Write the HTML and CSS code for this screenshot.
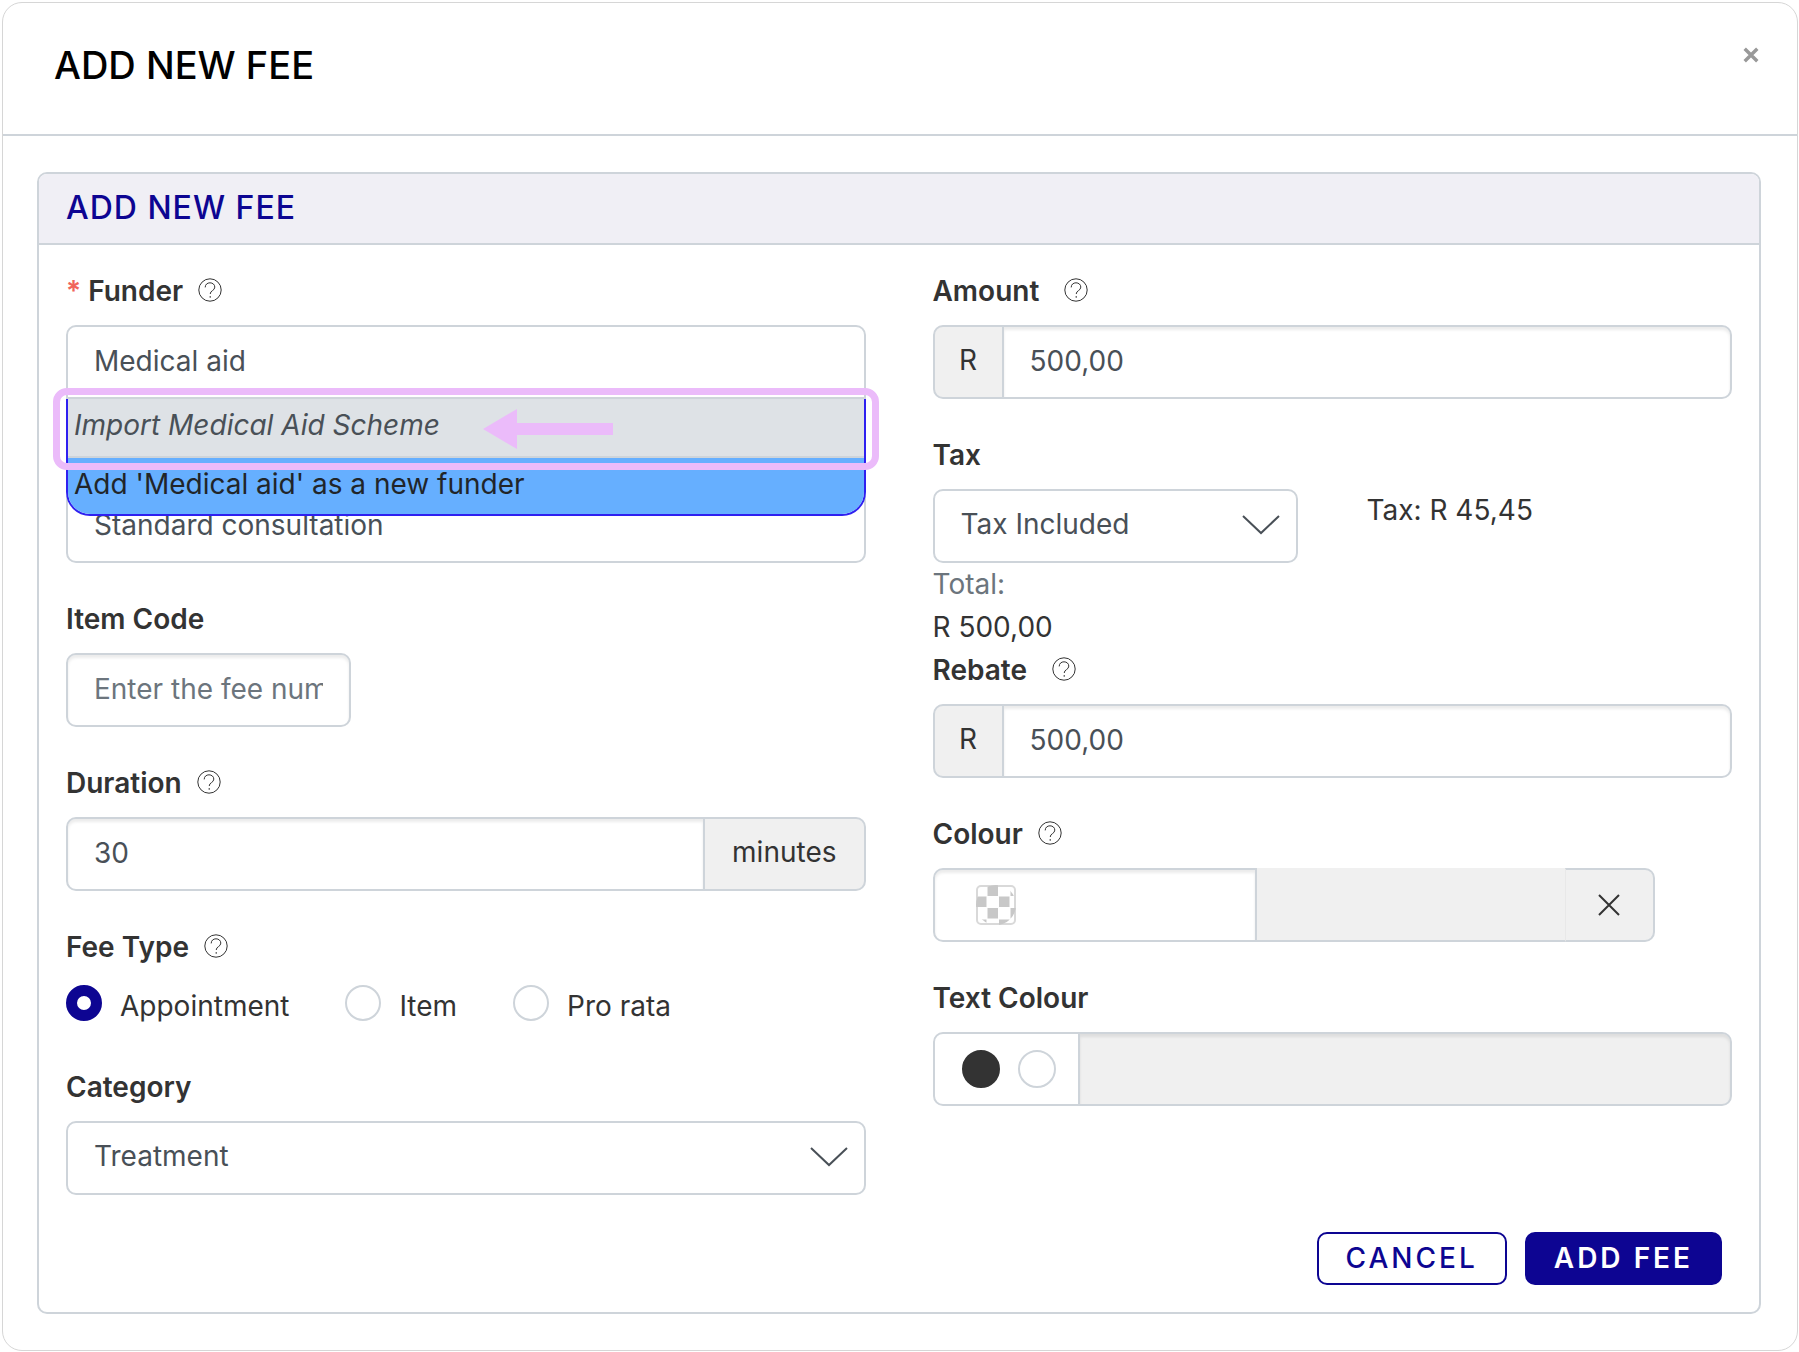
FILE: index.html
```html
<!DOCTYPE html>
<html lang="en">
<head>
  <meta charset="UTF-8">
  <meta name="viewport" content="width=device-width, initial-scale=1">
  <title>Add new fee</title>
  <link rel="stylesheet" href="styles.css">
</head>
<body>
  <!-- shared icons -->
  <svg class="sprite" aria-hidden="true">
    <symbol id="icon-help" viewBox="0 0 24 24">
      <circle cx="12" cy="12" r="11.2"/>
      <path d="M7.2 9.4c0-2.9 2.1-4.6 4.8-4.6s4.8 1.8 4.8 4.3c0 3.6-4.6 3.4-4.6 6.9M12.2 18v1.8"/>
    </symbol>
  </svg>

  <div class="modal" role="dialog" aria-labelledby="modalTitle">
    <header class="modal-header">
      <h1 id="modalTitle">ADD NEW FEE</h1>
      <button type="button" class="close" aria-label="Close">
        <svg viewBox="0 0 14 14"><path d="M1.5 1.5l11 11M12.5 1.5l-11 11"/></svg>
      </button>
    </header>

    <form class="panel">
      <h2 class="panel-header">ADD NEW FEE</h2>

      <div class="panel-body">
        <!-- Left column -->
        <div class="column">
          <div class="field funder">
            <div class="label-row">
              <label for="funder"><span class="required">*</span> Funder</label>
              <svg class="help"><use href="#icon-help"/></svg>
            </div>
            <div class="combo">
              <input type="text" id="funder" class="control open" value="Medical aid">
              <div class="menu">
                <button type="button" class="menu-item import">Import Medical Aid Scheme</button>
                <button type="button" class="menu-item active">Add 'Medical aid' as a new funder</button>
              </div>
              <div class="highlight">
                <svg class="arrow" viewBox="0 0 130 40"><path d="M0 20L34 0V14H130V26H34V40z"/></svg>
              </div>
            </div>
          </div>

          <div class="field">
            <div class="label-row"></div>
            <input type="text" class="control flat" aria-label="Description" value="Standard consultation">
          </div>

          <div class="field">
            <div class="label-row"><label for="itemCode">Item Code</label></div>
            <input type="text" id="itemCode" class="control code" placeholder="Enter the fee number">
          </div>

          <div class="field">
            <div class="label-row">
              <label for="duration">Duration</label>
              <svg class="help"><use href="#icon-help"/></svg>
            </div>
            <div class="group">
              <input type="text" id="duration" class="control" value="30">
              <span class="addon">minutes</span>
            </div>
          </div>

          <div class="field">
            <div class="label-row">
              <span class="label">Fee Type</span>
              <svg class="help"><use href="#icon-help"/></svg>
            </div>
            <div class="radios">
              <label><input type="radio" name="feeType" checked> <span>Appointment</span></label>
              <label><input type="radio" name="feeType"> <span>Item</span></label>
              <label><input type="radio" name="feeType"> <span>Pro rata</span></label>
            </div>
          </div>

          <div class="field">
            <div class="label-row"><label for="category">Category</label></div>
            <div class="select">
              <select id="category" class="control flat"><option>Treatment</option></select>
              <svg class="chevron" viewBox="0 0 38 20"><path d="M1 1l18 17L37 1"/></svg>
            </div>
          </div>
        </div>

        <!-- Right column -->
        <div class="column">
          <div class="field">
            <div class="label-row wide">
              <label for="amount">Amount</label>
              <svg class="help"><use href="#icon-help"/></svg>
            </div>
            <div class="group">
              <span class="addon currency">R</span>
              <input type="text" id="amount" class="control" value="500,00">
            </div>
          </div>

          <div class="field tax">
            <div class="label-row"><label for="tax">Tax</label></div>
            <div class="tax-row">
              <div class="select">
                <select id="tax" class="control flat"><option>Tax Included</option></select>
                <svg class="chevron" viewBox="0 0 38 20"><path d="M1 1l18 17L37 1"/></svg>
              </div>
              <span class="tax-value">Tax: R 45,45</span>
            </div>
            <div class="muted">Total:</div>
            <div>R 500,00</div>
          </div>

          <div class="field">
            <div class="label-row wide">
              <label for="rebate">Rebate</label>
              <svg class="help"><use href="#icon-help"/></svg>
            </div>
            <div class="group">
              <span class="addon currency">R</span>
              <input type="text" id="rebate" class="control" value="500,00">
            </div>
          </div>

          <div class="field">
            <div class="label-row">
              <span class="label">Colour</span>
              <svg class="help"><use href="#icon-help"/></svg>
            </div>
            <div class="group colour">
              <button type="button" class="picker" aria-label="Pick a colour">
                <svg class="checker" viewBox="0 0 40 40">
                  <clipPath id="round"><circle cx="20" cy="20" r="20"/></clipPath>
                  <rect x="1" y="1" width="38" height="38" rx="4"/>
                  <path clip-path="url(#round)" d="M11.500 0h10.500v11h-10.500zM0 11.500h10.500v10.500H0zM23 11.500h10.500v10.500H23zM11.500 23h10.500v10.500h-10.500zM34.500 0H40v11h-5.500zM0 34.500h10.500V40H0zM34.500 23H40v10.500h-5.500zM23 34.500h10.500V40H23z"/>
                </svg>
              </button>
              <span class="preview"></span>
              <button type="button" class="addon clear" aria-label="Clear colour">
                <svg viewBox="0 0 22 22"><path d="M1 1l20 20M21 1L1 21"/></svg>
              </button>
            </div>
          </div>

          <div class="field">
            <div class="label-row"><span class="label">Text Colour</span></div>
            <div class="group">
              <span class="swatches">
                <input type="radio" class="dark" name="textColour" aria-label="Dark">
                <input type="radio" name="textColour" aria-label="White">
              </span>
              <input type="text" class="control" aria-label="Text colour preview" disabled>
            </div>
          </div>
        </div>
      </div>

      <div class="actions">
        <button type="button" class="btn">CANCEL</button>
        <button type="submit" class="btn primary">ADD FEE</button>
      </div>
    </form>
  </div>
</body>
</html>
```
FILE: styles.css
```css
:root {
  --border: #ced4da;
  --text: #333;
  --input-text: #495057;
  --muted: #6c757d;
  --grey: #f0f0f0;
  --navy: #0d0592;
  --pink: #ebbbfa;
  --radius: 10px;
}
* { box-sizing: border-box; }
body {
  margin: 0;
  padding: 2px 1px 2px 2px;
  background: #fff;
  color: var(--text);
  font: 28px/43px Inter, "Liberation Sans", sans-serif;
}
input, select, button { font: inherit; color: inherit; margin: 0; }
button { cursor: pointer; }
svg { display: block; fill: none; stroke: currentColor; }
.sprite { position: absolute; width: 0; height: 0; }

/* ===== Modal ===== */
.modal { border: 1px solid #d6d6d6; border-radius: 20px; padding-bottom: 36px; }
.modal-header {
  display: flex;
  justify-content: space-between;
  align-items: flex-start;
  padding: 40px 38px 46px 51px;
  border-bottom: 2px solid var(--border);
}
h1 { margin: 0; font-size: 38px; line-height: 45px; font-weight: 500; color: #000; }
.close { border: 0; background: none; padding: 4px 0; color: #999; }
.close svg { width: 16px; height: 16px; stroke-width: 3; }

/* ===== Panel ===== */
.panel { margin: 36px 36px 0 34px; border: 2px solid var(--border); border-radius: var(--radius); }
.panel-header {
  margin: 0;
  padding: 12px 27px 14px;
  background: #f0eff5;
  border-bottom: 2px solid var(--border);
  border-radius: 8px 8px 0 0;
  color: var(--navy);
  font-size: 32px;
  font-weight: 500;
  letter-spacing: 1px;
}
.panel-body { display: grid; grid-template-columns: 1fr 1fr; gap: 67px; padding: 25px 27px 0; }

/* ===== Fields ===== */
.field { margin-bottom: 35px; }
.label-row { display: flex; align-items: center; gap: 15px; height: 43px; margin-bottom: 12px; }
.label-row.wide { gap: 25px; }
.label-row label, .label { font-weight: 600; }
.required { color: #f0655c; }
.help { width: 24px; height: 24px; margin-bottom: 3px; }
.control {
  display: block;
  width: 100%;
  height: 74px;
  padding: 0 26px 3px;
  background: #fff;
  border: 2px solid var(--border);
  border-radius: var(--radius);
  box-shadow: inset 0 3px 3px rgba(0, 0, 0, .08);
  color: var(--input-text);
  outline: 0;
}
.control::placeholder { color: var(--muted); opacity: 1; }
.control:disabled { background: var(--grey); }
.flat, .open { box-shadow: none; }
.open { border-radius: var(--radius) var(--radius) 0 0; }
.code { width: 285px; }
.muted { color: var(--muted); }

/* ===== Funder menu ===== */
.combo { position: relative; }
.menu {
  position: absolute;
  z-index: 1;
  top: 100%;
  left: 0;
  right: 0;
  border: 2px solid #2f20f0;
  border-top: 0;
  border-radius: 0 0 24px 24px;
  overflow: hidden;
}
.menu-item { display: block; width: 100%; padding: 0 6px 4px; border: 0; text-align: left; }
.import { height: 59px; background: #dee2e6; border-bottom: 2px solid var(--border); color: var(--input-text); font-style: italic; }
.active { height: 56px; background: #66afff; color: #212529; }
.highlight {
  position: absolute;
  z-index: 2;
  top: 63px;
  left: -13px;
  right: -13px;
  height: 82px;
  border: 7px solid var(--pink);
  border-radius: 14px;
  pointer-events: none;
}
.arrow { width: 130px; height: 40px; margin: 14px 0 0 423px; fill: var(--pink); stroke: none; }

/* ===== Input groups ===== */
.group { display: flex; }
.group > * { border-radius: 0; }
.group > :first-child { border-radius: var(--radius) 0 0 var(--radius); }
.group > :last-child { border-radius: 0 var(--radius) var(--radius) 0; }
.group > * + * { margin-left: -2px; }
.group .control { flex: 1; min-width: 0; }
.addon { height: 74px; padding: 12px 27px; background: var(--grey); border: 2px solid var(--border); }
.currency { width: 71px; padding: 12px 0; text-align: center; }
.swatches { display: flex; align-items: center; gap: 18px; padding: 0 22px 0 27px; border: 2px solid var(--border); }

/* ===== Colour picker ===== */
.colour { width: 722px; max-width: 100%; }
.picker { position: relative; width: 324px; height: 74px; padding: 0 41px; background: #fff; border: 2px solid var(--border); box-shadow: inset 0 3px 3px rgba(0, 0, 0, .08); }
.checker { width: 40px; height: 40px; fill: #c8c8c8; stroke: none; }
.checker rect { fill: #fff; stroke: #d9d9d9; stroke-width: 2; }
.preview { flex: 1; background: var(--grey); border-bottom: 2px solid var(--border); }
.clear { width: 90px; padding: 0 32px; border-left: 1px solid #e8e8e8; }
.clear svg { width: 22px; height: 22px; stroke-width: 2; }

/* ===== Select ===== */
.select { position: relative; }
.select select { appearance: none; }
.chevron { position: absolute; right: 18px; top: 26px; width: 38px; height: 20px; stroke: var(--input-text); stroke-width: 2; pointer-events: none; }
.tax { margin-bottom: 0; }
.tax-row { display: flex; gap: 69px; }
.tax-row .select { width: 365px; }

/* ===== Radios ===== */
.radios { display: flex; gap: 56px; padding-bottom: 7px; }
.radios label { display: flex; align-items: center; gap: 18px; }
.radios span { padding-top: 4px; margin-bottom: -4px; }
input[type=radio] { appearance: none; width: 36px; height: 36px; border: 2px solid var(--border); border-radius: 50%; background: #fff; }
.radios input:checked { border: 11px solid var(--navy); }
.swatches input[type=radio] { width: 38px; height: 38px; }
.swatches .dark { background: var(--text); border-color: var(--text); }

/* ===== Buttons ===== */
.actions { display: flex; justify-content: flex-end; gap: 18px; padding: 2px 37px 27px; }
.btn {
  height: 53px;
  padding: 0 27px;
  background: #fff;
  border: 2px solid var(--navy);
  border-radius: var(--radius);
  color: var(--navy);
  font-weight: 500;
  letter-spacing: 3px;
  line-height: 49px;
}
.primary { background: var(--navy); color: #fff; font-weight: 600; }
```
